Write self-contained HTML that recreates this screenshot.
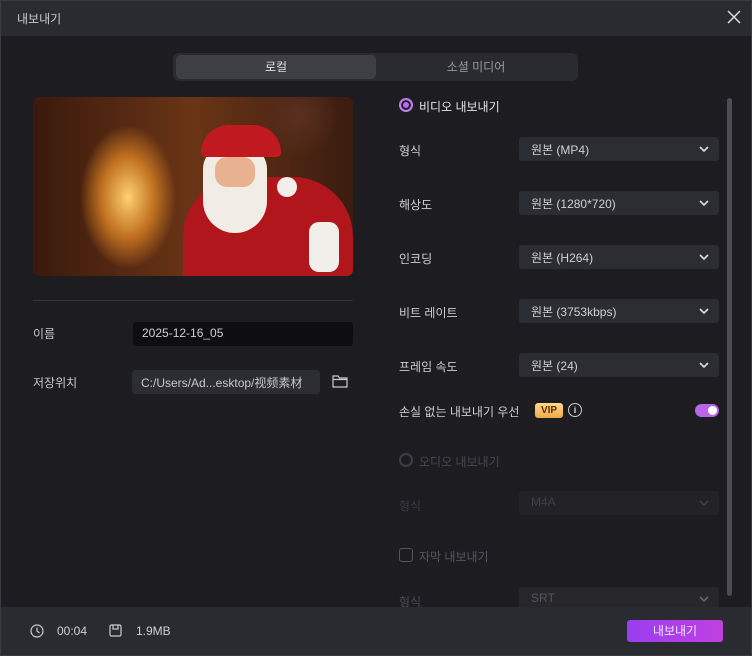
<!DOCTYPE html>
<html><head><meta charset="utf-8"><style>
*{margin:0;padding:0;box-sizing:border-box}
body{width:752px;height:656px;background:#1c1c21;font-family:"Liberation Sans","Noto Sans CJK KR",sans-serif;color:#d8d8dc;font-size:12px;position:relative;overflow:hidden}
.abs{position:absolute}
.title{left:0;top:0;width:752px;height:36px;background:#2a2b30}
.sel{left:519px;width:200px;height:24px;background:#2c2d33;border-radius:3px;font-size:12px;padding:4px 12px;color:#d0d0d4}
.sel svg{position:absolute;right:10px;top:9px}
.lbl{left:399px;font-size:12px;color:#cfcfd3}
</style></head><body>
<div class="abs title"></div>
<div class="abs" style="left:17px;top:10px;font-size:12px;color:#ccc">내보내기</div>
<svg class="abs" style="left:727px;top:10px" width="14" height="14"><path d="M1 1L13 13M13 1L1 13" stroke="#ddd" stroke-width="1.5"/></svg>
<div class="abs" style="left:173px;top:53px;width:405px;height:28px;background:#2a2b30;border-radius:6px"></div>
<div class="abs" style="left:176px;top:55px;width:200px;height:24px;background:#3e3f45;border-radius:5px;text-align:center;line-height:24px;color:#e0e0e0">로컬</div>
<div class="abs" style="left:376px;top:55px;width:200px;height:24px;text-align:center;line-height:24px;color:#9a9aa0">소셜 미디어</div>
<div class="abs" style="left:33px;top:97px;width:320px;height:179px;border-radius:6px;overflow:hidden;background:radial-gradient(ellipse 60px 90px at 95px 100px,#ffd070,#c07020 45%,transparent 80%),radial-gradient(circle at 265px 20px,#5a3020,transparent 40px),linear-gradient(90deg,#3a1a0c,#6a3416 50%,#3a1c10)">
<div class="abs" style="left:150px;top:80px;width:170px;height:110px;background:#b0161c;border-radius:60px 60px 0 0"></div>
<div class="abs" style="left:170px;top:48px;width:64px;height:88px;background:#f2ece6;border-radius:30px 30px 40px 40px"></div>
<div class="abs" style="left:182px;top:60px;width:40px;height:30px;background:#e8b190;border-radius:12px"></div>
<div class="abs" style="left:168px;top:28px;width:80px;height:32px;background:#c01a20;border-radius:40px 40px 6px 6px"></div>
<div class="abs" style="left:244px;top:80px;width:20px;height:20px;background:#f2eeea;border-radius:50%"></div>
<div class="abs" style="left:276px;top:125px;width:30px;height:50px;background:#f2eeea;border-radius:10px"></div>
</div>
<div class="abs" style="left:33px;top:300px;width:320px;height:1px;background:#34353a"></div>
<div class="abs" style="left:33px;top:325px;color:#c8c8cc">이름</div>
<div class="abs" style="left:133px;top:322px;width:220px;height:24px;background:#0e0e11;border-radius:3px;padding:4px 9px;color:#d0d0d4">2025-12-16_05</div>
<div class="abs" style="left:33px;top:374px;color:#c8c8cc">저장위치</div>
<div class="abs" style="left:132px;top:370px;width:188px;height:24px;background:#2c2d33;border-radius:3px;padding:4px 9px;color:#c8c8cc;white-space:nowrap;overflow:hidden">C:/Users/Ad...esktop/视频素材</div>
<svg class="abs" style="left:332px;top:374px" width="16" height="14"><path d="M1 2h5l1.5 2H15v9H1z M1 5.5h14" fill="none" stroke="#ccc" stroke-width="1.2"/></svg>
<div class="abs" style="left:399px;top:98px;width:14px;height:14px;border-radius:50%;border:2px solid #c07ef0;background:#b86ee8;box-shadow:inset 0 0 0 2px #1c1c21"></div>
<div class="abs" style="left:419px;top:98px;color:#e6e6ea">비디오 내보내기</div>
<div class="abs lbl" style="top:142px">형식</div><div class="abs sel" style="top:137px">원본 (MP4)<svg width="10" height="7"><path d="M1 1l4 4 4-4" fill="none" stroke="#ddd" stroke-width="1.6"/></svg></div>
<div class="abs lbl" style="top:196px">해상도</div><div class="abs sel" style="top:191px">원본 (1280*720)<svg width="10" height="7"><path d="M1 1l4 4 4-4" fill="none" stroke="#ddd" stroke-width="1.6"/></svg></div>
<div class="abs lbl" style="top:250px">인코딩</div><div class="abs sel" style="top:245px">원본 (H264)<svg width="10" height="7"><path d="M1 1l4 4 4-4" fill="none" stroke="#ddd" stroke-width="1.6"/></svg></div>
<div class="abs lbl" style="top:304px">비트 레이트</div><div class="abs sel" style="top:299px">원본 (3753kbps)<svg width="10" height="7"><path d="M1 1l4 4 4-4" fill="none" stroke="#ddd" stroke-width="1.6"/></svg></div>
<div class="abs lbl" style="top:358px">프레임 속도</div><div class="abs sel" style="top:353px">원본 (24)<svg width="10" height="7"><path d="M1 1l4 4 4-4" fill="none" stroke="#ddd" stroke-width="1.6"/></svg></div>
<div class="abs lbl" style="top:403px">손실 없는 내보내기 우선</div>
<div class="abs" style="left:535px;top:403px;width:28px;height:15px;background:linear-gradient(#ffd98a,#f0a94a);border-radius:3px;color:#5a3000;font-size:10px;font-weight:bold;text-align:center;line-height:15px">VIP</div>
<div class="abs" style="left:568px;top:403px;width:14px;height:14px;border:1.3px solid #ccc;border-radius:50%;font-size:9px;text-align:center;line-height:12px;color:#ddd;font-weight:bold">i</div>
<div class="abs" style="left:695px;top:404px;width:24px;height:13px;background:#b866e6;border-radius:7px"><div class="abs" style="right:2px;top:2px;width:9px;height:9px;border-radius:50%;background:#fff"></div></div>
<div class="abs" style="left:399px;top:453px;width:14px;height:14px;border-radius:50%;border:2px solid #3e3f44"></div>
<div class="abs" style="left:419px;top:453px;color:#47484d">오디오 내보내기</div>
<div class="abs lbl" style="top:497px;color:#3a3b40">형식</div><div class="abs sel" style="top:491px;background:#222227;color:#3f4045">M4A<svg width="10" height="7"><path d="M1 1l4 4 4-4" fill="none" stroke="#3f4045" stroke-width="1.6"/></svg></div>
<div class="abs" style="left:399px;top:548px;width:14px;height:14px;border-radius:3px;border:1.5px solid #55565b"></div>
<div class="abs" style="left:419px;top:548px;color:#55565b">자막 내보내기</div>
<div class="abs lbl" style="top:593px;color:#4a4b50">형식</div><div class="abs sel" style="top:587px;background:#26262b;color:#55565b">SRT<svg width="10" height="7"><path d="M1 1l4 4 4-4" fill="none" stroke="#66676c" stroke-width="1.6"/></svg></div>
<div class="abs" style="left:727px;top:98px;width:5px;height:498px;background:#4c4d52;border-radius:3px"></div>
<div class="abs" style="left:0;top:607px;width:752px;height:49px;background:#2a2b30"></div>
<svg class="abs" style="left:30px;top:624px" width="14" height="14"><circle cx="7" cy="7" r="6" fill="none" stroke="#ccc" stroke-width="1.2"/><path d="M7 3.5V7l2.5 2" fill="none" stroke="#ccc" stroke-width="1.2"/></svg>
<div class="abs" style="left:57px;top:624px;color:#d0d0d4">00:04</div>
<svg class="abs" style="left:109px;top:624px" width="13" height="13"><rect x="1" y="1" width="11" height="11" rx="1.5" fill="none" stroke="#ccc" stroke-width="1.2"/><path d="M4 1v4h5V1" fill="none" stroke="#ccc" stroke-width="1.2"/></svg>
<div class="abs" style="left:136px;top:624px;color:#d0d0d4">1.9MB</div>
<div class="abs" style="left:627px;top:620px;width:96px;height:22px;border-radius:3px;background:linear-gradient(90deg,#9a3ef0,#c040e0);text-align:center;line-height:22px;color:#f0e6ff">내보내기</div>
<div class="abs" style="left:0;top:0;width:752px;height:656px;border:1px solid #3a3b40;pointer-events:none"></div>
</body></html>
